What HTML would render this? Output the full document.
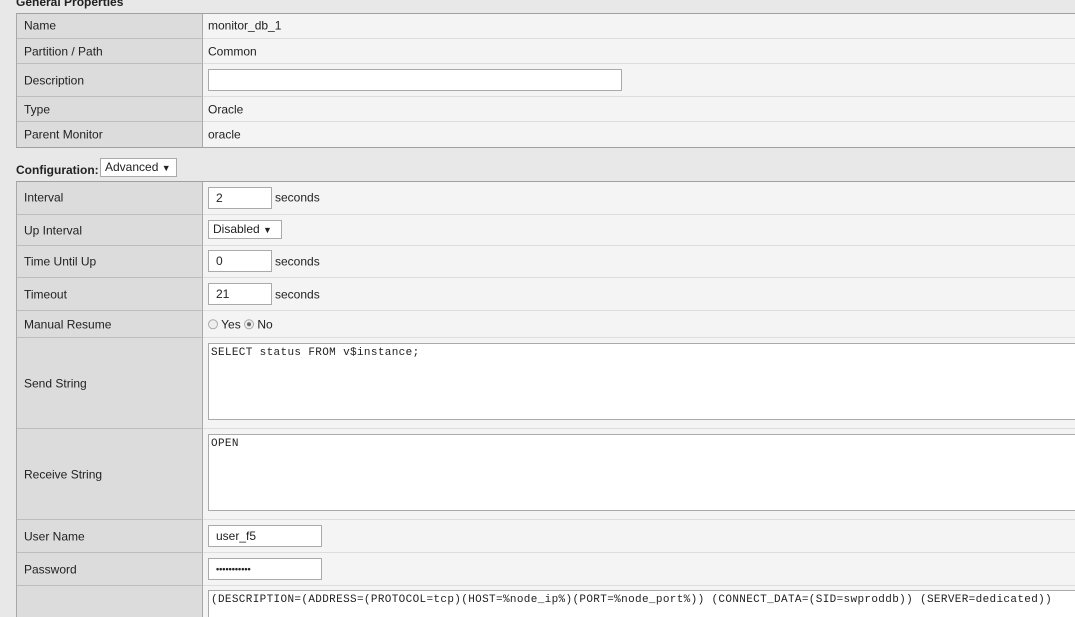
<!DOCTYPE html>
<html><head><meta charset="utf-8"><style>
html,body{margin:0;width:1075px;height:617px;overflow:hidden}
body{background:#e8e8e8;font-family:"Liberation Sans",Arial,sans-serif;font-size:12px;color:#222;position:relative}
.t{position:absolute;left:16px;width:1075px;border-left:1px solid #a8a8a8;border-top:1px solid #a0a0a0;border-bottom:1px solid #a0a0a0;background:#f4f4f4}
.r{position:absolute;left:0;width:1075px;border-top:1px solid #ddd}
.l{position:absolute;left:0;top:0;bottom:0;width:185px;background:#dcdcdc;border-right:1px solid #a8a8a8;border-top:1px solid #bdbdbd;margin-top:-1px}
.l span{position:absolute;left:7px;top:50%;transform:translateY(-55%)}
.v{position:absolute;left:191px;top:50%;transform:translateY(-55%);white-space:nowrap}
.in{position:absolute;background:#fff;border:1px solid #aaa;box-sizing:border-box;font-size:12px;padding-left:7px;line-height:21px}
.ta{position:absolute;background:#fff;border:1px solid #aaa;box-sizing:border-box;font-family:"Liberation Mono","DejaVu Sans Mono",monospace;font-size:11px;letter-spacing:0.35px;padding:2px 2px;line-height:14px;white-space:pre}
.h{position:absolute;font-weight:bold;font-size:12px;left:16px}
.sel{position:absolute;background:#fff;border:1px solid #aaa;box-sizing:border-box;padding:0 4px;line-height:17px;white-space:nowrap}
.sel small{font-size:9px}
.rad{display:inline-block;width:10px;height:10px;border-radius:50%;border:1px solid #aaa;background:#eee;vertical-align:-1px;box-sizing:border-box;position:relative}
.rad.on:after{content:"";position:absolute;left:2px;top:2px;width:4px;height:4px;border-radius:50%;background:#666}
</style></head><body>
<div class="h" style="top:-5px">General Properties</div>
<div class="t" style="top:13px;height:133px">
 <div class="r" style="top:0;height:24px;border-top:none"><div class="l" style="border-top:none;margin-top:0"><span>Name</span></div><span class="v">monitor_db_1</span></div>
 <div class="r" style="top:24px;height:25px"><div class="l"><span>Partition / Path</span></div><span class="v">Common</span></div>
 <div class="r" style="top:49px;height:33px"><div class="l"><span>Description</span></div></div>
 <div class="r" style="top:82px;height:25px"><div class="l"><span>Type</span></div><span class="v">Oracle</span></div>
 <div class="r" style="top:107px;height:25px"><div class="l"><span>Parent Monitor</span></div><span class="v">oracle</span></div>
</div>
<div class="in" style="left:208px;top:69px;width:414px;height:22px"></div>
<div class="h" style="top:163px">Configuration:</div>
<div class="sel" style="left:100px;top:158px;width:77px;height:19px;padding:0 4px">Advanced <small>▼</small></div>
<div class="t" style="top:181px;height:440px;border-bottom:none">
 <div class="r" style="top:0;height:32px;border-top:none"><div class="l" style="border-top:none;margin-top:0"><span>Interval</span></div><span class="v" style="left:258px">seconds</span></div>
 <div class="r" style="top:32px;height:31px"><div class="l"><span>Up Interval</span></div></div>
 <div class="r" style="top:63px;height:32px"><div class="l"><span>Time Until Up</span></div><span class="v" style="left:258px">seconds</span></div>
 <div class="r" style="top:95px;height:33px"><div class="l"><span>Timeout</span></div><span class="v" style="left:258px">seconds</span></div>
 <div class="r" style="top:128px;height:27px"><div class="l"><span>Manual Resume</span></div><span class="v"><span class="rad"></span> Yes <span class="rad on"></span> No</span></div>
 <div class="r" style="top:155px;height:91px"><div class="l"><span>Send String</span></div></div>
 <div class="r" style="top:246px;height:91px"><div class="l"><span>Receive String</span></div></div>
 <div class="r" style="top:337px;height:33px"><div class="l"><span>User Name</span></div></div>
 <div class="r" style="top:370px;height:33px"><div class="l"><span>Password</span></div></div>
 <div class="r" style="top:403px;height:40px"><div class="l"></div></div>
</div>
<div class="in" style="left:208px;top:187px;width:64px;height:22px">2</div>
<div class="sel" style="left:208px;top:220px;width:74px;height:19px">Disabled <small>▼</small></div>
<div class="in" style="left:208px;top:250px;width:64px;height:22px">0</div>
<div class="in" style="left:208px;top:283px;width:64px;height:22px">21</div>
<div class="ta" style="left:208px;top:343px;width:875px;height:77px">SELECT status FROM v$instance;</div>
<div class="ta" style="left:208px;top:434px;width:875px;height:77px">OPEN</div>
<div class="in" style="left:208px;top:525px;width:114px;height:22px">user_f5</div>
<div class="in" style="left:208px;top:558px;width:114px;height:22px;font-size:9px;font-weight:bold">•••••••••••</div>
<div class="ta" style="left:208px;top:590px;width:875px;height:40px">(DESCRIPTION=(ADDRESS=(PROTOCOL=tcp)(HOST=%node_ip%)(PORT=%node_port%)) (CONNECT_DATA=(SID=swproddb)) (SERVER=dedicated))</div>
</body></html>
